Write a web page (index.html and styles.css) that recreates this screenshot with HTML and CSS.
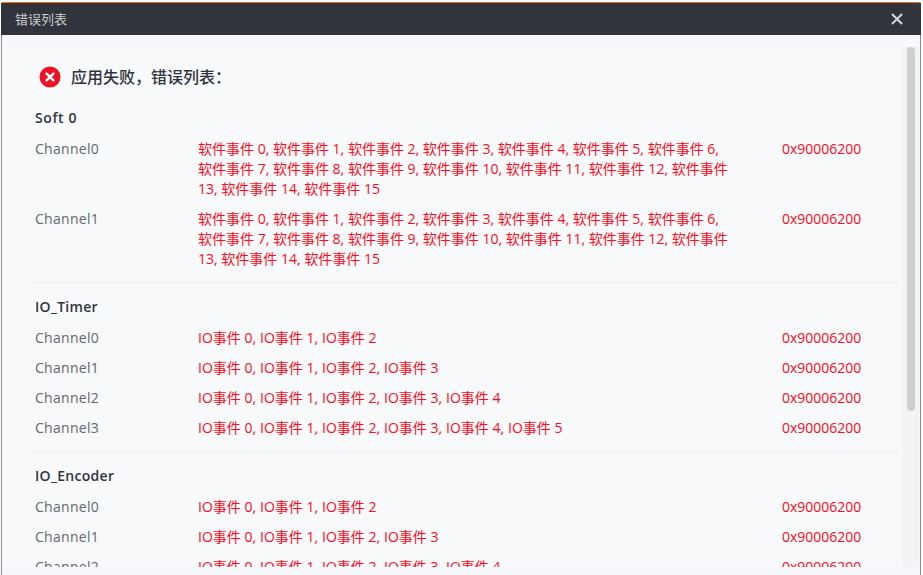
FILE: index.html
```html
<!DOCTYPE html>
<html lang="zh-CN">
<head>
<meta charset="utf-8">
<title>错误列表</title>
<link rel="stylesheet" href="styles.css">
</head>
<body>
<div class="dialog">
  <header class="titlebar">
    <span class="titlebar-text">错误列表</span>
    <svg class="close" width="12" height="12" viewBox="0 0 12 12"><path d="M1 1L11 11M11 1L1 11"/></svg>
  </header>
  <div class="body">
    <main class="content">
      <div class="summary">
        <svg width="22" height="22" viewBox="0 0 22 22"><circle cx="11" cy="11" r="10.5" fill="#ee1126"/><path d="M7.6 7.6L14.4 14.4M14.4 7.6L7.6 14.4" stroke="#fff" stroke-width="2.4" stroke-linecap="round"/></svg>
        <h1>应用失败，错误列表：</h1>
      </div>
      <section class="group soft">
        <h2>Soft 0</h2>
        <div class="row"><span class="name">Channel0</span><span class="events">软件事件 0, 软件事件 1, 软件事件 2, 软件事件 3, 软件事件 4, 软件事件 5, 软件事件 6, <br>软件事件 7, 软件事件 8, 软件事件 9, 软件事件 10, 软件事件 11, 软件事件 12, 软件事件 <br>13, 软件事件 14, 软件事件 15</span><span class="code">0x90006200</span></div>
        <div class="row"><span class="name">Channel1</span><span class="events">软件事件 0, 软件事件 1, 软件事件 2, 软件事件 3, 软件事件 4, 软件事件 5, 软件事件 6, <br>软件事件 7, 软件事件 8, 软件事件 9, 软件事件 10, 软件事件 11, 软件事件 12, 软件事件 <br>13, 软件事件 14, 软件事件 15</span><span class="code">0x90006200</span></div>
      </section>
      <section class="group">
        <h2>IO_Timer</h2>
        <div class="row"><span class="name">Channel0</span><span class="events">IO事件 0, IO事件 1, IO事件 2</span><span class="code">0x90006200</span></div>
        <div class="row"><span class="name">Channel1</span><span class="events">IO事件 0, IO事件 1, IO事件 2, IO事件 3</span><span class="code">0x90006200</span></div>
        <div class="row"><span class="name">Channel2</span><span class="events">IO事件 0, IO事件 1, IO事件 2, IO事件 3, IO事件 4</span><span class="code">0x90006200</span></div>
        <div class="row"><span class="name">Channel3</span><span class="events">IO事件 0, IO事件 1, IO事件 2, IO事件 3, IO事件 4, IO事件 5</span><span class="code">0x90006200</span></div>
      </section>
      <section class="group">
        <h2>IO_Encoder</h2>
        <div class="row"><span class="name">Channel0</span><span class="events">IO事件 0, IO事件 1, IO事件 2</span><span class="code">0x90006200</span></div>
        <div class="row"><span class="name">Channel1</span><span class="events">IO事件 0, IO事件 1, IO事件 2, IO事件 3</span><span class="code">0x90006200</span></div>
        <div class="row"><span class="name">Channel2</span><span class="events">IO事件 0, IO事件 1, IO事件 2, IO事件 3, IO事件 4</span><span class="code">0x90006200</span></div>
      </section>
    </main>
    <div class="track"><div class="thumb"></div></div>
  </div>
</div>
</body>
</html>
```
FILE: styles.css
```css
* { box-sizing: border-box; }
html, body { height: 100%; }
body {
  margin: 0;
  padding: 2px 2px 0 1px;
  overflow: hidden;
  background: #fbfcfd;
  font: 14px/20px "Open Sans", "Noto Sans CJK SC", sans-serif;
}
.dialog {
  height: 573px;
  border-top: 1px solid #f56a0a;
  border-radius: 2px 2px 0 0;
  background: #f7f8fc;
}
.titlebar {
  display: flex;
  align-items: center;
  justify-content: space-between;
  height: 32px;
  padding: 0 18px 0 14px;
  background: #31343d;
  color: #c9c9c9;
  font-size: 13px;
}
.close { fill: none; stroke: #d8d8d8; stroke-width: 2; }
.body {
  display: flex;
  height: 540px;
  padding: 12px 1px 8px 0;
  border: solid #8b8d90;
  border-width: 0 1px;
}
.content {
  flex: 1;
  overflow: hidden;
  padding: 19px 6px 0 33px;
  background: #f7f9fb;
}
.summary {
  display: flex;
  align-items: center;
  gap: 10px;
  height: 22px;
  padding-left: 4px;
  margin-bottom: 20px;
}
h1, h2 { margin: 0; color: #31343d; }
h1 { font-size: 16px; line-height: 22px; font-weight: 500; }
h2 { font-size: 14px; line-height: 20px; font-weight: 600; letter-spacing: 0.3px; margin-bottom: 11px; }
.soft h2 { letter-spacing: 0.6px; }
.group + .group {
  margin-top: 13px;
  padding-top: 14px;
  border-top: 1px solid #eceef0;
}
.row {
  display: grid;
  grid-template-columns: 163px 584px 1fr;
  color: #ff0a20;
  white-space: nowrap;
}
.row + .row { margin-top: 10px; }
.name { color: #64676c; letter-spacing: 0.3px; }
.events { word-spacing: 0.15px; }
.soft .events { word-spacing: 0.02px; }
.track {
  width: 16px;
  padding: 0 4px;
  background: #f2f3f5;
}
.thumb {
  height: 364px;
  border-radius: 4px;
  background: #d0cecf;
}
```
